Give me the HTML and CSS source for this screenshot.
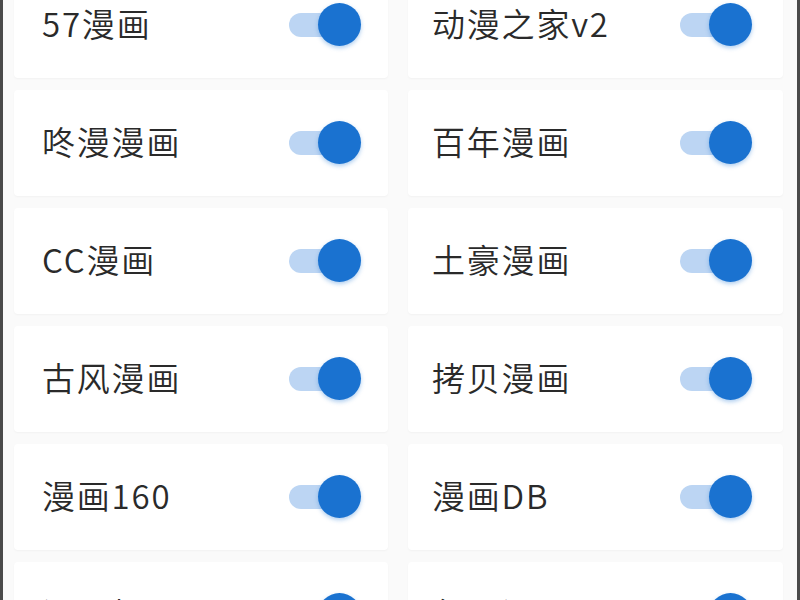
FILE: index.html
```html
<!DOCTYPE html>
<html lang="zh">
<head>
<meta charset="utf-8">
<title>漫画源</title>
<link rel="stylesheet" href="styles.css">
</head>
<body>
<div class="frame">
  <div class="grid">
    <div class="card"><span class="label">57漫画</span><span class="toggle"><span class="track"></span><span class="thumb"></span></span></div>
    <div class="card"><span class="label">动漫之家v2</span><span class="toggle"><span class="track"></span><span class="thumb"></span></span></div>
    <div class="card"><span class="label">咚漫漫画</span><span class="toggle"><span class="track"></span><span class="thumb"></span></span></div>
    <div class="card"><span class="label">百年漫画</span><span class="toggle"><span class="track"></span><span class="thumb"></span></span></div>
    <div class="card"><span class="label">CC漫画</span><span class="toggle"><span class="track"></span><span class="thumb"></span></span></div>
    <div class="card"><span class="label">土豪漫画</span><span class="toggle"><span class="track"></span><span class="thumb"></span></span></div>
    <div class="card"><span class="label">古风漫画</span><span class="toggle"><span class="track"></span><span class="thumb"></span></span></div>
    <div class="card"><span class="label">拷贝漫画</span><span class="toggle"><span class="track"></span><span class="thumb"></span></span></div>
    <div class="card"><span class="label">漫画160</span><span class="toggle"><span class="track"></span><span class="thumb"></span></span></div>
    <div class="card"><span class="label">漫画DB</span><span class="toggle"><span class="track"></span><span class="thumb"></span></span></div>
    <div class="card"><span class="label">漫画柜</span><span class="toggle"><span class="track"></span><span class="thumb"></span></span></div>
    <div class="card"><span class="label">包子漫画</span><span class="toggle"><span class="track"></span><span class="thumb"></span></span></div>
  </div>
</div>
</body>
</html>
```

FILE: styles.css
```css
html, body {
  margin: 0;
  padding: 0;
}
body {
  width: 800px;
  height: 600px;
  overflow: hidden;
  background: #fafafa;
  font-family: "Noto Sans CJK SC", "Noto Sans", sans-serif;
}
.frame {
  box-sizing: border-box;
  width: 800px;
  height: 600px;
  border-left: 3px solid #4a4a4a;
  border-right: 3px solid #4a4a4a;
  padding: 0 14px 0 11px;
  overflow: hidden;
}
.grid {
  margin-top: -28px;
  display: grid;
  grid-template-columns: 374px 375px;
  column-gap: 20px;
  row-gap: 12px;
}
.card {
  height: 106px;
  background: #ffffff;
  border-radius: 4px;
  box-shadow: 0 1px 2px rgba(0, 0, 0, 0.035);
  display: flex;
  align-items: center;
  justify-content: space-between;
  padding: 0 27px 0 28px;
}
.card:nth-child(2n) {
  padding: 0 31px 0 24px;
}
.label {
  font-size: 33px;
  font-weight: 350;
  color: #2a2a2a;
  letter-spacing: 1.8px;
  padding-bottom: 4px;
}
.toggle {
  position: relative;
  width: 72px;
  height: 44px;
  flex: none;
}
.track {
  position: absolute;
  left: 0;
  top: 10px;
  width: 60px;
  height: 24px;
  border-radius: 12px;
  background: #bcd5f3;
}
.thumb {
  position: absolute;
  right: 0;
  top: 0;
  width: 43px;
  height: 43px;
  border-radius: 50%;
  background: #1a72d0;
  box-shadow: 0 2px 4px rgba(26, 114, 208, 0.35);
}
```
